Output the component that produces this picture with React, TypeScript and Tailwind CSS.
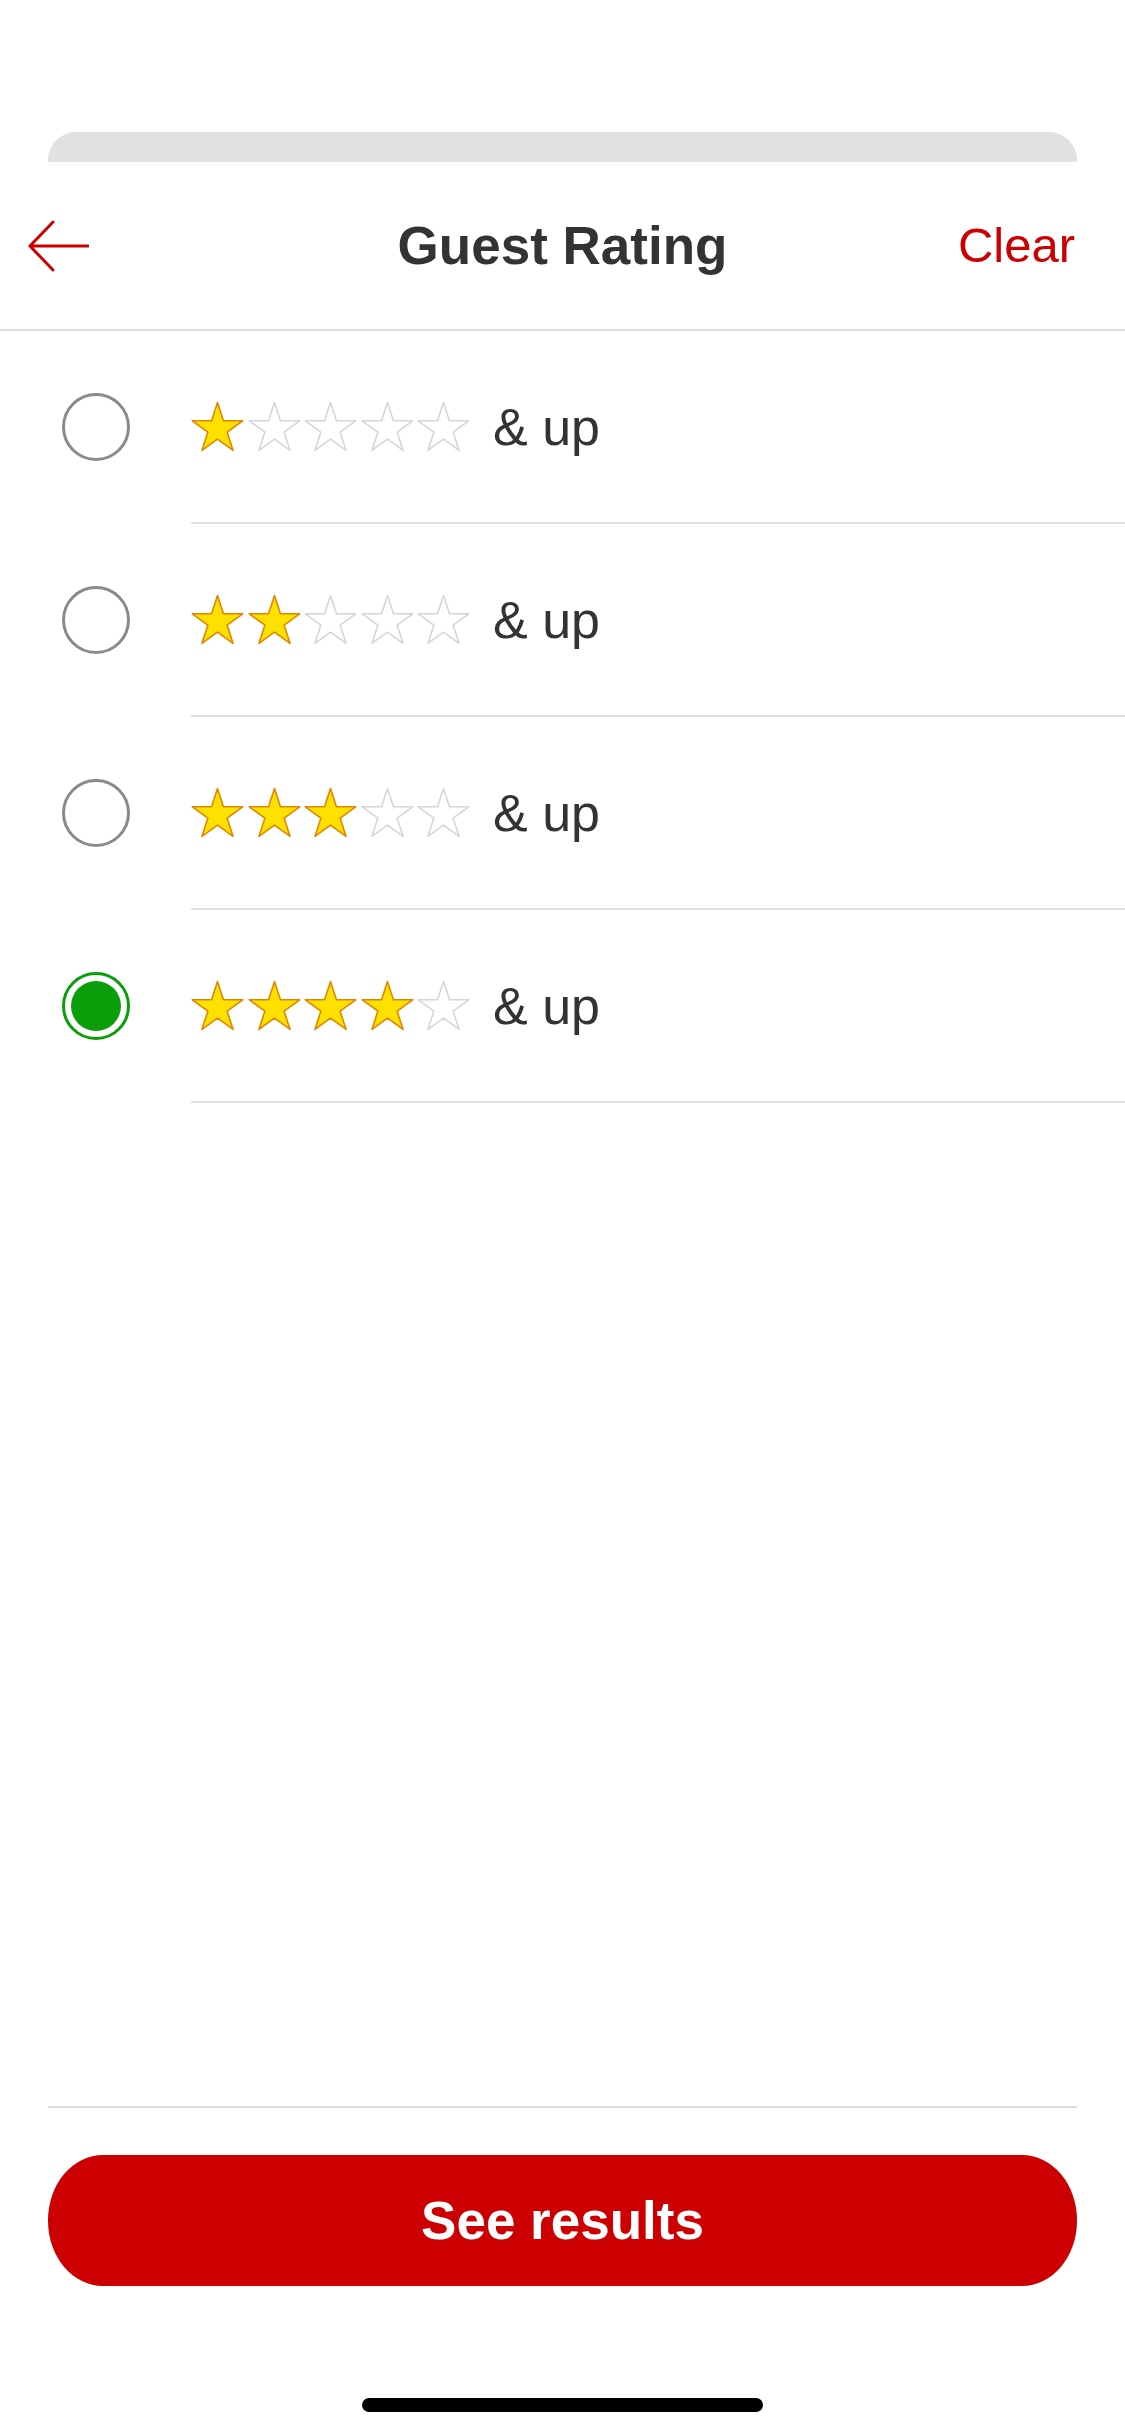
import React from "react";

const STAR = "10,0.5 12.245,7.41 19.51,7.41 13.633,11.68 15.88,18.59 10,14.32 4.12,18.59 6.367,11.68 0.49,7.41 7.755,7.41";

function Star({ filled }: { filled: boolean }) {
  return (
    <svg width="53" height="52" viewBox="0 0 20 19.5" className="shrink-0">
      <polygon
        points={STAR}
        fill={filled ? "#FFE100" : "#ffffff"}
        stroke={filled ? "#E08600" : "#d6d6d6"}
        strokeWidth="0.6"
        strokeLinejoin="round"
      />
    </svg>
  );
}

function Radio({ selected }: { selected: boolean }) {
  if (selected) {
    return (
      <div className="w-[68px] h-[68px] rounded-full border-[3px] border-[#0a9e0a] flex items-center justify-center shrink-0">
        <div className="w-[50px] h-[50px] rounded-full bg-[#0a9e0a]" />
      </div>
    );
  }
  return <div className="w-[68px] h-[68px] rounded-full border-[3px] border-[#8a8a8a] shrink-0" />;
}

function Row({ count, selected }: { count: number; selected: boolean }) {
  return (
    <div className="flex flex-col">
      <div className="h-[191px] flex items-center">
        <div className="ml-[62px]">
          <Radio selected={selected} />
        </div>
        <div className="ml-[61px] flex gap-[3.5px]">
          {[0, 1, 2, 3, 4].map((i) => (
            <Star key={i} filled={i < count} />
          ))}
        </div>
        <span className="ml-[23px] text-[52px] text-[#333333] leading-none">&amp; up</span>
      </div>
      <div className="ml-[191px] h-[2px] bg-[#e0e0e0]" />
    </div>
  );
}

export default function App() {
  return (
    <div
      className="w-[1125px] h-[2436px] bg-white flex flex-col overflow-hidden"
      style={{ fontFamily: '"Liberation Sans", Arial, sans-serif' }}
    >
      <div className="h-[132px] shrink-0" />
      <div className="mx-[48px] h-[30px] bg-[#e1e1e1] rounded-t-[28px] shrink-0" />
      <div className="h-[167px] shrink-0 grid grid-cols-[1fr_auto_1fr] items-center">
        <div className="pl-[27px] flex items-center">
          <svg width="62" height="52" viewBox="0 0 62 52" fill="none">
            <path d="M61 26H3M26 2L3 26L26 50" stroke="#cc0000" strokeWidth="3" strokeLinecap="round" strokeLinejoin="round" />
          </svg>
        </div>
        <div className="text-[53px] font-bold text-[#333333] leading-none">Guest Rating</div>
        <div className="flex justify-end pr-[50px]">
          <span className="text-[49px] text-[#cc0000] leading-none">Clear</span>
        </div>
      </div>
      <div className="h-[2px] bg-[#dcdcdc] shrink-0" />
      <Row count={1} selected={false} />
      <Row count={2} selected={false} />
      <Row count={3} selected={false} />
      <Row count={4} selected={true} />
      <div className="flex-1" />
      <div className="mx-[48px] h-[2px] bg-[#dcdcdc] shrink-0" />
      <div className="mt-[47px] mx-[48px] h-[131px] bg-[#cc0000] rounded-[55px/65px] flex items-center justify-center shrink-0">
        <span className="text-[53px] font-bold text-white leading-none">See results</span>
      </div>
      <div className="mt-[112px] mb-[24px] self-center w-[401px] h-[14px] rounded-full bg-black shrink-0" />
    </div>
  );
}
